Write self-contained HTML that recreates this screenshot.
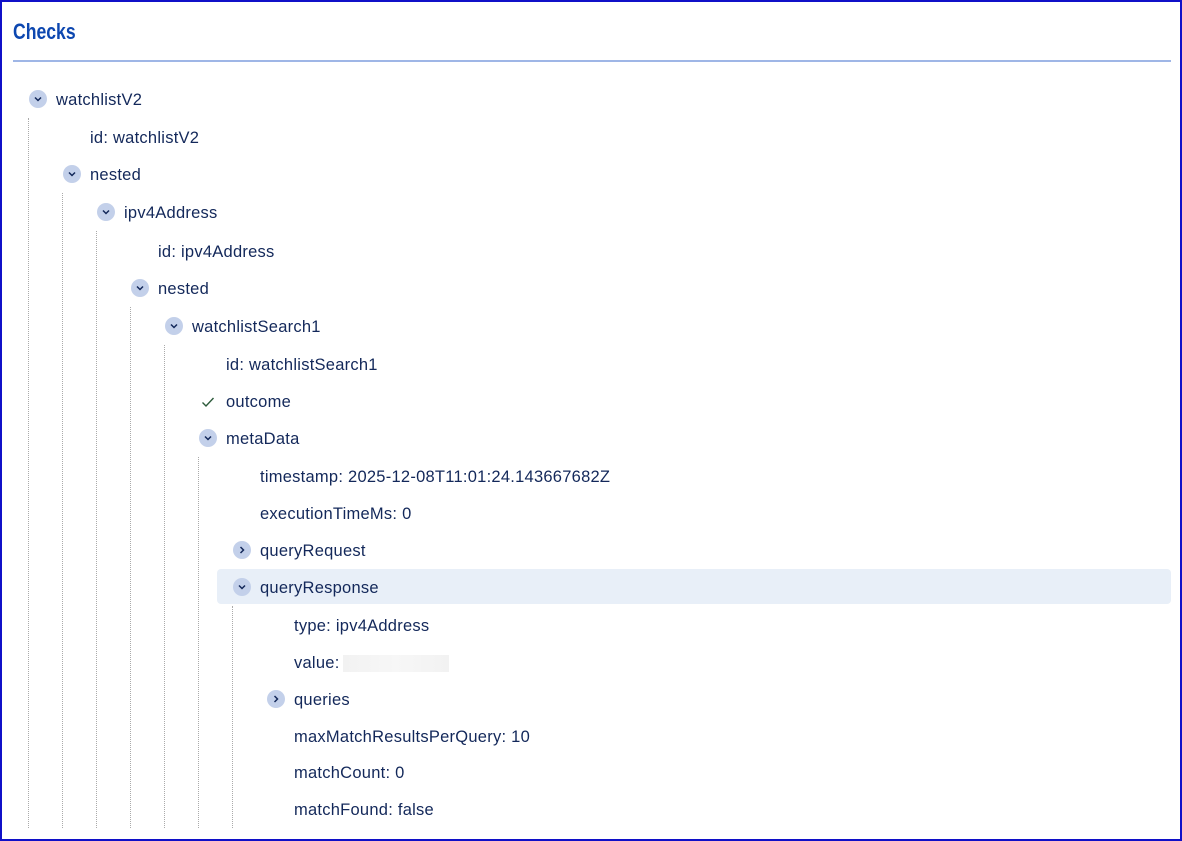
<!DOCTYPE html>
<html><head><style>
html,body{margin:0;padding:0;}
body{width:1182px;height:841px;position:relative;overflow:hidden;background:#fff;font-family:"Liberation Sans",sans-serif;color:#13285a;}
.frame{position:absolute;left:0;top:0;width:1178px;height:837px;border:2px solid #1010c8;}
h1{position:absolute;left:13px;top:19px;margin:0;font-size:22px;font-weight:bold;color:#0d47b0;transform:scaleX(0.8);transform-origin:left;}
.hr{position:absolute;left:13px;top:60px;width:1158px;height:2px;background:#9fb6e6;}
.row{position:absolute;font-size:16.5px;line-height:20px;white-space:nowrap;letter-spacing:0.25px;}
.tg{position:absolute;width:18px;height:18px;border-radius:50%;background:#c3d0ea;}
.tg svg{position:absolute;left:4px;top:4px;}
.vl{position:absolute;width:0;border-left:1px dotted #aaa;bottom:13px;}
.hl{position:absolute;left:217px;top:569px;width:954px;height:35px;background:#e8eff8;border-radius:4px;}
.blur{position:absolute;left:343px;top:655px;width:106px;height:17px;background:linear-gradient(90deg,#f2f2f2,#f7f7f7,#f2f2f2);}
</style></head><body>
<div class="frame"></div>
<h1>Checks</h1>
<div class="hr"></div>
<div class="hl"></div>
<div class="vl" style="left:28px;top:118px"></div>
<div class="vl" style="left:62px;top:193px"></div>
<div class="vl" style="left:96px;top:231px"></div>
<div class="vl" style="left:130px;top:307px"></div>
<div class="vl" style="left:164px;top:345px"></div>
<div class="vl" style="left:198px;top:457px"></div>
<div class="vl" style="left:232px;top:606px"></div>

<div class="tg" style="left:29px;top:90px"><svg width="10" height="10"><path d="M2 3.5l3 3L8 3.5" fill="none" stroke="#13285a" stroke-width="1.5"/></svg></div>
<div class="tg" style="left:63px;top:165px"><svg width="10" height="10"><path d="M2 3.5l3 3L8 3.5" fill="none" stroke="#13285a" stroke-width="1.5"/></svg></div>
<div class="tg" style="left:97px;top:203px"><svg width="10" height="10"><path d="M2 3.5l3 3L8 3.5" fill="none" stroke="#13285a" stroke-width="1.5"/></svg></div>
<div class="tg" style="left:131px;top:279px"><svg width="10" height="10"><path d="M2 3.5l3 3L8 3.5" fill="none" stroke="#13285a" stroke-width="1.5"/></svg></div>
<div class="tg" style="left:165px;top:317px"><svg width="10" height="10"><path d="M2 3.5l3 3L8 3.5" fill="none" stroke="#13285a" stroke-width="1.5"/></svg></div>
<div class="tg" style="left:199px;top:429px"><svg width="10" height="10"><path d="M2 3.5l3 3L8 3.5" fill="none" stroke="#13285a" stroke-width="1.5"/></svg></div>
<div class="tg" style="left:233px;top:541px"><svg width="10" height="10"><path d="M3.5 2l3 3L3.5 8" fill="none" stroke="#13285a" stroke-width="1.5"/></svg></div>
<div class="tg" style="left:233px;top:578px"><svg width="10" height="10"><path d="M2 3.5l3 3L8 3.5" fill="none" stroke="#13285a" stroke-width="1.5"/></svg></div>
<div class="tg" style="left:267px;top:690px"><svg width="10" height="10"><path d="M3.5 2l3 3L3.5 8" fill="none" stroke="#13285a" stroke-width="1.5"/></svg></div>
<svg style="position:absolute;left:201px;top:395px" width="14" height="14"><path d="M1.5 7.5l3.5 3.5L12.5 3" fill="none" stroke="#2c5a3a" stroke-width="1.4"/></svg>

<div class="row" style="left:56px;top:90px">watchlistV2</div>
<div class="row" style="left:90px;top:128px">id: watchlistV2</div>
<div class="row" style="left:90px;top:165px">nested</div>
<div class="row" style="left:124px;top:203px">ipv4Address</div>
<div class="row" style="left:158px;top:242px">id: ipv4Address</div>
<div class="row" style="left:158px;top:279px">nested</div>
<div class="row" style="left:192px;top:317px">watchlistSearch1</div>
<div class="row" style="left:226px;top:355px">id: watchlistSearch1</div>
<div class="row" style="left:226px;top:392px">outcome</div>
<div class="row" style="left:226px;top:429px">metaData</div>
<div class="row" style="left:260px;top:467px">timestamp: 2025-12-08T11:01:24.143667682Z</div>
<div class="row" style="left:260px;top:504px">executionTimeMs: 0</div>
<div class="row" style="left:260px;top:541px">queryRequest</div>
<div class="row" style="left:260px;top:578px">queryResponse</div>
<div class="row" style="left:294px;top:616px">type: ipv4Address</div>
<div class="row" style="left:294px;top:653px">value:</div>
<div class="blur"></div>
<div class="row" style="left:294px;top:690px">queries</div>
<div class="row" style="left:294px;top:727px">maxMatchResultsPerQuery: 10</div>
<div class="row" style="left:294px;top:763px">matchCount: 0</div>
<div class="row" style="left:294px;top:800px">matchFound: false</div>
</body></html>
